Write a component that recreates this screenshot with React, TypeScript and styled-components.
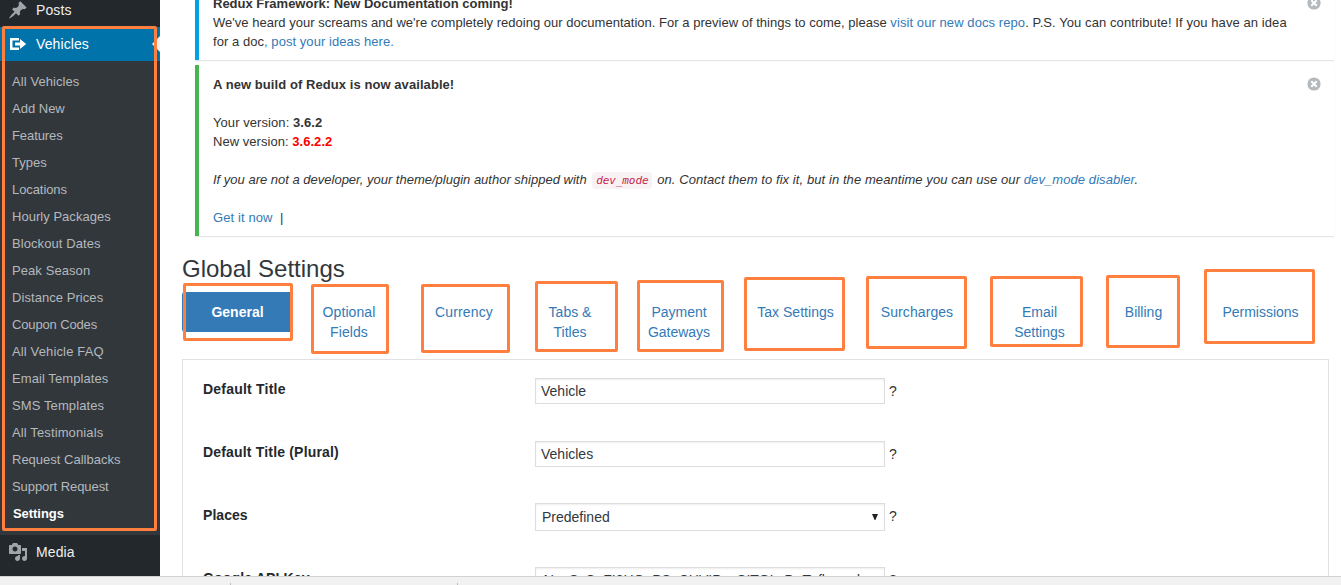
import React from "react";
import styled, { createGlobalStyle, css } from "styled-components";

const GlobalStyle = createGlobalStyle`
  *, *::before, *::after { box-sizing: border-box; }
  body {
    margin: 0;
    overflow: hidden;
    background: #fff;
    font-family: "Liberation Sans", Arial, sans-serif;
    color: #333;
  }
`;

const Window = styled.div`
  position: relative;
  display: flex;
  flex-direction: column;
  width: 1341px;
  height: 585px;
  overflow: hidden;
`;

const Workspace = styled.div`
  display: flex;
  height: 576px;
  overflow: hidden;
`;

const StatusBar = styled.footer`
  display: flex;
  align-items: flex-end;
  gap: 226px;
  height: 9px;
  padding-left: 230px;
  border-top: 1px solid #d2d2d2;
  background: #f1f1f1;
`;

const Tick = styled.span`
  width: 1px;
  height: 2px;
  background: #bbb;
`;

const Sidebar = styled.nav`
  flex: none;
  width: 160px;
  height: 576px;
  overflow: hidden;
  background: #23282d;
`;

const MenuRow = styled.a<{ $active?: boolean; $first?: boolean }>`
  position: relative;
  display: flex;
  align-items: center;
  gap: 8px;
  height: 34px;
  margin-top: ${(p) => (p.$first ? "-7px" : "0")};
  padding-left: 8px;
  font-size: 14px;
  letter-spacing: 0.1px;
  color: ${(p) => (p.$active ? "#fff" : "#eee")};
  background: ${(p) => (p.$active ? "#0073aa" : "transparent")};
  svg { flex: none; }
`;

const CurrentArrow = styled.span`
  position: absolute;
  right: 0;
  top: 9px;
  border: 8px solid transparent;
  border-left-width: 0;
  border-right-color: #f1f1f1;
`;

const Submenu = styled.ul`
  margin: 0;
  padding: 7px 0 8px;
  list-style: none;
  background: #32373c;
`;

const SubmenuItem = styled.li<{ $current?: boolean; $spacing: number }>`
  height: 27px;
  padding-left: 12px;
  font-size: 13px;
  line-height: 27px;
  letter-spacing: ${(p) => p.$spacing}px;
  color: #b4b9be;
  ${(p) => p.$current && css`
    padding-left: 13px;
    color: #fff;
    font-weight: 700;
  `}
`;

const Content = styled.main`
  flex: 1;
  min-width: 0;
  padding: 0 7px 0 22px;
`;

const Notices = styled.div`
  display: flex;
  flex-direction: column;
  gap: 5px;
  margin: -16px 0 0 13px;
`;

const Notice = styled.section<{ $accent: string }>`
  display: flex;
  justify-content: space-between;
  padding: 10px 13px 9px 14px;
  border-left: 4px solid ${(p) => p.$accent};
  background: #fff;
  box-shadow: 0 1px 1px 0 rgba(0, 0, 0, 0.1);
  font-size: 13px;
  line-height: 19px;
`;

const NoticeText = styled.div`
  min-height: 19px;
  white-space: nowrap;
`;

const Line = styled.p<{ $spacing?: number; $italic?: boolean }>`
  height: 19px;
  margin: 0;
  letter-spacing: ${(p) => p.$spacing ?? 0}px;
  font-style: ${(p) => (p.$italic ? "italic" : "normal")};
`;

const Loose = styled.span`
  letter-spacing: 0.082px;
`;

const Link = styled.a`
  color: #337ab7;
`;

const NewVersion = styled.b`
  color: #f00;
`;

const Code = styled.code`
  margin-left: 2px;
  padding: 2px 4px;
  border-radius: 4px;
  background: #f9f2f4;
  color: #c7254e;
  font-family: "DejaVu Sans Mono", monospace;
  font-size: 11px;
  letter-spacing: -0.1px;
`;

const Dismiss = styled.button`
  align-self: flex-start;
  display: flex;
  margin: 2px 0 0;
  padding: 0;
  border: 0;
  background: none;
`;

const PageTitle = styled.h1`
  margin: 19px 0 0;
  height: 28px;
  font-size: 24px;
  font-weight: 400;
  line-height: 28px;
  color: #32373c;
`;

const Tabs = styled.div`
  display: flex;
  height: 67px;
  margin-top: 9px;
`;

const TabCell = styled.div<{ $width: number }>`
  flex: none;
  display: flex;
  justify-content: center;
  align-items: flex-start;
  width: ${(p) => p.$width}px;
`;

const Tab = styled.a<{ $active?: boolean; $spacing?: number }>`
  padding: 10px 0;
  border-radius: 3px;
  font-size: 14px;
  line-height: 20px;
  letter-spacing: ${(p) => p.$spacing ?? 0}px;
  text-align: center;
  white-space: pre-line;
  color: #337ab7;
  ${(p) => p.$active && css`
    width: 111px;
    margin-right: 1px;
    color: #fff;
    font-weight: 700;
    background: #337ab7;
  `}
`;

const Panel = styled.form`
  width: 1147px;
  height: 300px;
  padding: 18px 0 0 20px;
  border: 1px solid #e1e1e1;
`;

const Field = styled.div`
  display: flex;
  align-items: flex-start;
  height: 63px;
`;

const Label = styled.label<{ $spacing: number }>`
  width: 332px;
  font-size: 14px;
  font-weight: 700;
  line-height: 22px;
  letter-spacing: ${(p) => p.$spacing}px;
  color: #23282d;
`;

const Control = styled.div<{ $select?: boolean }>`
  display: flex;
  align-items: center;
  justify-content: space-between;
  width: 350px;
  height: ${(p) => (p.$select ? 28 : 26)}px;
  margin-top: ${(p) => (p.$select ? -1 : 0)}px;
  padding: 0 6px 0 ${(p) => (p.$select ? 6 : 5)}px;
  border: 1px solid #ddd;
  box-shadow: inset 0 1px 2px rgba(0, 0, 0, 0.07);
  font-size: 14px;
  color: #32373c;
  white-space: nowrap;
  overflow: hidden;
`;

const Help = styled.span<{ $raised?: boolean }>`
  margin-left: 4px;
  font-size: 14px;
  line-height: ${(p) => (p.$raised ? 24 : 26)}px;
`;

const Highlight = styled.div<{ $x: number; $y: number; $w: number; $h: number }>`
  position: absolute;
  left: ${(p) => p.$x}px;
  top: ${(p) => p.$y}px;
  width: ${(p) => p.$w}px;
  height: ${(p) => p.$h}px;
  border: 3px solid #ff7f3f;
  border-radius: 2px;
  pointer-events: none;
`;

const PinIcon = () => (
  <svg width="20" height="20" viewBox="0 0 20 20" fill="#a0a5aa">
    <path d="M10.44 3.02l1.82-1.82 6.36 6.35-1.83 1.82c-1.05-.68-2.48-.57-3.41.36l-.75.75c-.92.93-1.04 2.35-.35 3.41l-1.83 1.82-2.41-2.41-2.8 2.79c-.42.42-3.38 2.71-3.8 2.29s1.86-3.39 2.28-3.81l2.79-2.79L4.1 9.36l1.83-1.82c1.05.69 2.48.57 3.4-.36l.75-.75c.93-.92 1.05-2.35.36-3.41z" />
  </svg>
);

const ExitIcon = () => (
  <svg width="20" height="20" viewBox="0 0 20 20" fill="#fff">
    <path d="M2 4h9v2.500H4.500v7H11V16H2z M7 8.500h5V5l6.200 5-6.200 5v-3.500H7z" />
  </svg>
);

const MediaIcon = () => (
  <svg width="20" height="20" viewBox="0 0 20 20" fill="#a0a5aa">
    <path d="M13 11V4c0-.55-.45-1-1-1h-1.670L9 1H5L3.670 3H2c-.55 0-1 .45-1 1v7c0 .55.45 1 1 1h10c.55 0 1-.45 1-1zM7 4.500c1.380 0 2.500 1.120 2.500 2.500S8.380 9.500 7 9.500 4.500 8.380 4.500 7 5.620 4.500 7 4.500zM14 6h5v10.500c0 1.380-1.120 2.500-2.500 2.500S14 17.880 14 16.500s1.120-2.500 2.500-2.500c.17 0 .34.02.5.05V9h-3V6zm-4 8.050V13h2v3.500c0 1.380-1.120 2.500-2.500 2.500S7 17.880 7 16.500 8.120 14 9.500 14c.17 0 .34.02.5.050z" />
  </svg>
);

const DismissIcon = () => (
  <svg width="14" height="14" viewBox="0 0 14 14">
    <circle cx="7" cy="7" r="6.600" fill="#b4b9be" />
    <path d="M4.300 4.300l5.400 5.400M9.700 4.300l-5.400 5.400" stroke="#fff" strokeWidth="2" />
  </svg>
);

const CaretIcon = () => (
  <svg width="6" height="6" viewBox="0 0 6 6">
    <path d="M0 0h6L3.400 6h-.8z" fill="#222" />
  </svg>
);

const submenu: [string, number][] = [
  ["All Vehicles", 0.08],
  ["Add New", 0],
  ["Features", -0.08],
  ["Types", 0],
  ["Locations", -0.08],
  ["Hourly Packages", 0.03],
  ["Blockout Dates", 0.08],
  ["Peak Season", 0.08],
  ["Distance Prices", 0.06],
  ["Coupon Codes", -0.14],
  ["All Vehicle FAQ", 0.14],
  ["Email Templates", 0.08],
  ["SMS Templates", 0.1],
  ["All Testimonials", 0.12],
  ["Request Callbacks", 0],
  ["Support Request", -0.06],
  ["Settings", -0.05],
];

const tabs = [
  { label: "General", width: 112 },
  { label: "Optional\nFields", width: 110, spacing: 0.1 },
  { label: "Currency", width: 120, spacing: 0.15 },
  { label: "Tabs &\nTitles", width: 92 },
  { label: "Payment\nGateways", width: 126 },
  { label: "Tax Settings", width: 107, spacing: 0.04 },
  { label: "Surcharges", width: 136, spacing: 0.08 },
  { label: "Email\nSettings", width: 109 },
  { label: "Billing", width: 99 },
  { label: "Permissions", width: 135 },
];

const fields = [
  { label: "Default Title", value: "Vehicle", spacing: 0.22 },
  { label: "Default Title (Plural)", value: "Vehicles", spacing: 0.18 },
  { label: "Places", value: "Predefined", spacing: 0.05, select: true },
  { label: "Google API Key", value: "AIzaSyCaFI3HGaPSaCHVIPxaCITGLxDaTzflgmnd", spacing: 0.15 },
];

const highlights = [
  [2, 26, 155, 505],
  [183, 283, 110, 58],
  [311, 284, 78, 70],
  [421, 284, 89, 69],
  [535, 281, 83, 71],
  [637, 280, 87, 72],
  [744, 277, 101, 74],
  [866, 276, 101, 73],
  [990, 276, 93, 71],
  [1106, 275, 74, 73],
  [1204, 269, 111, 75],
];

export default function App() {
  return (
    <Window>
      <GlobalStyle />
      <Workspace>
        <Sidebar>
          <MenuRow $first><PinIcon />Posts</MenuRow>
          <MenuRow $active><ExitIcon />Vehicles<CurrentArrow /></MenuRow>
          <Submenu>
            {submenu.map(([item, spacing]) => (
              <SubmenuItem key={item} $spacing={spacing} $current={item === "Settings"}>{item}</SubmenuItem>
            ))}
          </Submenu>
          <MenuRow><MediaIcon />Media</MenuRow>
        </Sidebar>
        <Content>
          <Notices>
            <Notice $accent="#00a2e3">
              <NoticeText>
                <Line><b>Redux Framework: New Documentation coming!</b></Line>
                <Line $spacing={0.018}>
                  We've heard your screams and we're completely redoing our documentation. For a preview of things to come, please <Loose><Link>visit our new docs repo</Link>. P.S. You can contribute! If you have an idea</Loose>
                </Line>
                <Line $spacing={0.05}>for a doc<Link>, post your ideas here.</Link></Line>
              </NoticeText>
              <Dismiss><DismissIcon /></Dismiss>
            </Notice>
            <Notice $accent="#46b450">
              <NoticeText>
                <Line $spacing={0.07}><b>A new build of Redux is now available!</b></Line>
                <Line />
                <Line $spacing={0.07}>Your version: <b>3.6.2</b></Line>
                <Line $spacing={0.04}>New version: <NewVersion>3.6.2.2</NewVersion></Line>
                <Line />
                <Line $italic>
                  If you are not a developer, your theme/plugin author shipped with <Code>dev_mode</Code> <Loose>&#8202;on. Contact them to fix it, but in the meantime you can use our <Link>dev_mode disabler</Link>.</Loose>
                </Line>
                <Line />
                <Line $spacing={0.1}><Link>Get it now</Link>&nbsp; |</Line>
              </NoticeText>
              <Dismiss><DismissIcon /></Dismiss>
            </Notice>
          </Notices>
          <PageTitle>Global Settings</PageTitle>
          <Tabs>
            {tabs.map((t, i) => (
              <TabCell key={t.label} $width={t.width}>
                <Tab $active={i === 0} $spacing={t.spacing}>{t.label}</Tab>
              </TabCell>
            ))}
          </Tabs>
          <Panel>
            {fields.map((f) => (
              <Field key={f.label}>
                <Label $spacing={f.spacing}>{f.label}</Label>
                <Control $select={f.select}>{f.value}{f.select && <CaretIcon />}</Control>
                <Help $raised={f.select}>?</Help>
              </Field>
            ))}
          </Panel>
        </Content>
      </Workspace>
      <StatusBar><Tick /><Tick /></StatusBar>
      {highlights.map(([x, y, w, h]) => (
        <Highlight key={x} $x={x} $y={y} $w={w} $h={h} />
      ))}
    </Window>
  );
}
